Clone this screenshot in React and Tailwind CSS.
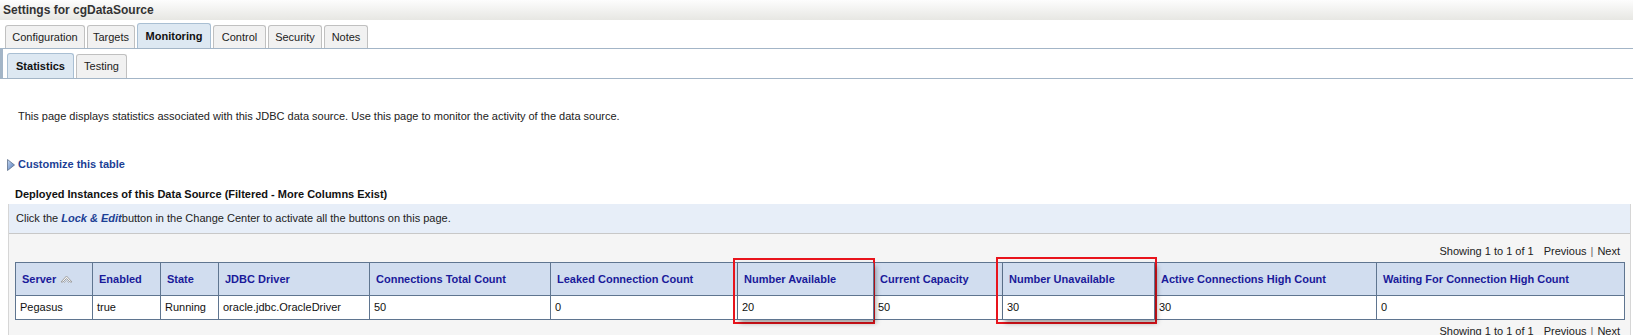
import React from 'react'

const topTabs = [
  { label: 'Configuration', w: 80 },
  { label: 'Targets', w: 48 },
  { label: 'Monitoring', w: 74, active: true },
  { label: 'Control', w: 53 },
  { label: 'Security', w: 54 },
  { label: 'Notes', w: 44 },
]

const columns = [
  { label: 'Server', w: 77, value: 'Pegasus', sort: true },
  { label: 'Enabled', w: 68, value: 'true' },
  { label: 'State', w: 58, value: 'Running' },
  { label: 'JDBC Driver', w: 151, value: 'oracle.jdbc.OracleDriver' },
  { label: 'Connections Total Count', w: 181, value: '50' },
  { label: 'Leaked Connection Count', w: 187, value: '0' },
  { label: 'Number Available', w: 136, value: '20', hl: true },
  { label: 'Current Capacity', w: 129, value: '50' },
  { label: 'Number Unavailable', w: 152, value: '30', hl: true },
  { label: 'Active Connections High Count', w: 222, value: '30' },
  { label: 'Waiting For Connection High Count', w: 248, value: '0' },
]

function SortIcon() {
  return (
    <svg width="13" height="10" viewBox="0 0 13 10" className="ml-[4px] inline-block">
      <path d="M1 8 L6.5 2 L12 8 L10 8 L6.5 4.5 L3 8 Z" fill="#f4f4f4" stroke="#9a9a9a" strokeWidth="0.9" strokeLinejoin="round" />
      <path d="M4 9 L6.5 6.5 L9 9" fill="none" stroke="#b5b5b5" strokeWidth="0.9" />
    </svg>
  )
}

function Paging() {
  return (
    <div className="flex h-[13px] items-center justify-end pr-[10px] text-[#222]">
      <span>Showing 1 to 1 of 1</span>
      <span className="ml-[10px]">Previous</span>
      <span className="mx-[4px] text-[#666]">|</span>
      <span>Next</span>
    </div>
  )
}

export default function App() {
  return (
    <div className="relative h-[335px] w-[1633px] overflow-hidden bg-white font-['Liberation_Sans',Arial,sans-serif] text-[11px] leading-[13px] text-[#222]">
      <div className="flex h-[20px] items-center bg-gradient-to-b from-[#fdfdfd] to-[#e7e7e3] pl-[3px] text-[12px] font-bold text-[#333]">
        Settings for cgDataSource
      </div>

      <div className="flex h-[29px] items-end gap-[2px] border-b border-[#a3b5c7] pl-[5px]">
        {topTabs.map((t) => (
          <div
            key={t.label}
            style={{ width: t.w }}
            className={`flex items-center justify-center rounded-t-[3px] border border-b-0 ${
              t.active
                ? 'h-[25px] border-[#a9bfd3] bg-[#dde8f2] font-bold text-[#111]'
                : 'h-[23px] border-[#c0c0c0] bg-[#f1f1f1] text-[#222]'
            }`}
          >
            {t.label}
          </div>
        ))}
      </div>

      <div className="flex h-[30px] items-end gap-[2px] border-b border-l-[3px] border-[#a3b5c7] pl-[4px]">
        <div className="flex h-[25px] w-[67px] items-center justify-center rounded-t-[3px] border border-b-0 border-[#a9bfd3] bg-[#dde8f2] font-bold text-[#111]">
          Statistics
        </div>
        <div className="flex h-[24px] w-[51px] items-center justify-center rounded-t-[3px] border border-b-0 border-[#c0c0c0] bg-[#f1f1f1]">
          Testing
        </div>
      </div>

      <div className="pl-[18px] pt-[31px]">
        This page displays statistics associated with this JDBC data source. Use this page to monitor the activity of the data source.
      </div>

      <div className="mt-[35px] flex h-[13px] items-center pl-[7px]">
        <svg width="8" height="12" viewBox="0 0 8 12" className="mr-[3px]">
          <defs>
            <linearGradient id="tri" x1="0" y1="0" x2="1" y2="1">
              <stop offset="0" stopColor="#c9dbf3" />
              <stop offset="1" stopColor="#4a74b8" />
            </linearGradient>
          </defs>
          <path d="M0.5 0.5 L7.5 6 L0.5 11.5 Z" fill="url(#tri)" stroke="#5d6f8a" strokeWidth="0.8" />
        </svg>
        <span className="font-bold text-[#1c3f95]">Customize this table</span>
      </div>

      <div className="mt-[17px] pl-[15px] font-bold text-[#111]">
        Deployed Instances of this Data Source (Filtered - More Columns Exist)
      </div>

      <div className="mt-[3px] ml-[8px] mr-[2px] border-x border-[#d6d6d6]">
        <div className="flex h-[30px] items-center border-b border-[#c8c8c8] bg-[#e7eef8] pl-[7px]">
          Click the&nbsp;<span className="font-bold italic text-[#1c3f95]">Lock &amp; Edit</span>button in the Change Center to activate all the buttons on this page.
        </div>
        <div className="h-[110px] bg-[#f5f5f5] pt-[11px]">
          <Paging />
          <div className="mt-[4px] ml-[6px] flex w-fit border-l border-t border-[#5f7590]">
            {columns.map((c) => (
              <div
                key={c.label}
                style={{ width: c.w }}
                className={`border-b border-r border-[#5f7590] ${c.hl ? 'relative z-10 shadow-[2px_3px_5px_rgba(0,0,0,0.35)]' : ''}`}
              >
                <div className="flex h-[33px] items-center border-b border-[#5f7590] bg-[#d1ddef] pl-[6px] font-bold text-[#1a1a9a]">
                  {c.label}
                  {c.sort ? <SortIcon /> : null}
                </div>
                <div className="flex h-[23px] items-center bg-white pl-[4px] text-[#111]">{c.value}</div>
              </div>
            ))}
          </div>
          <div className="mt-[5px]">
            <Paging />
          </div>
        </div>
      </div>

      <div className="pointer-events-none absolute left-[733px] top-[258px] h-[66px] w-[142px] border-2 border-[#e8141c]" />
      <div className="pointer-events-none absolute left-[996px] top-[257px] h-[67px] w-[161px] border-2 border-[#e8141c]" />
    </div>
  )
}
